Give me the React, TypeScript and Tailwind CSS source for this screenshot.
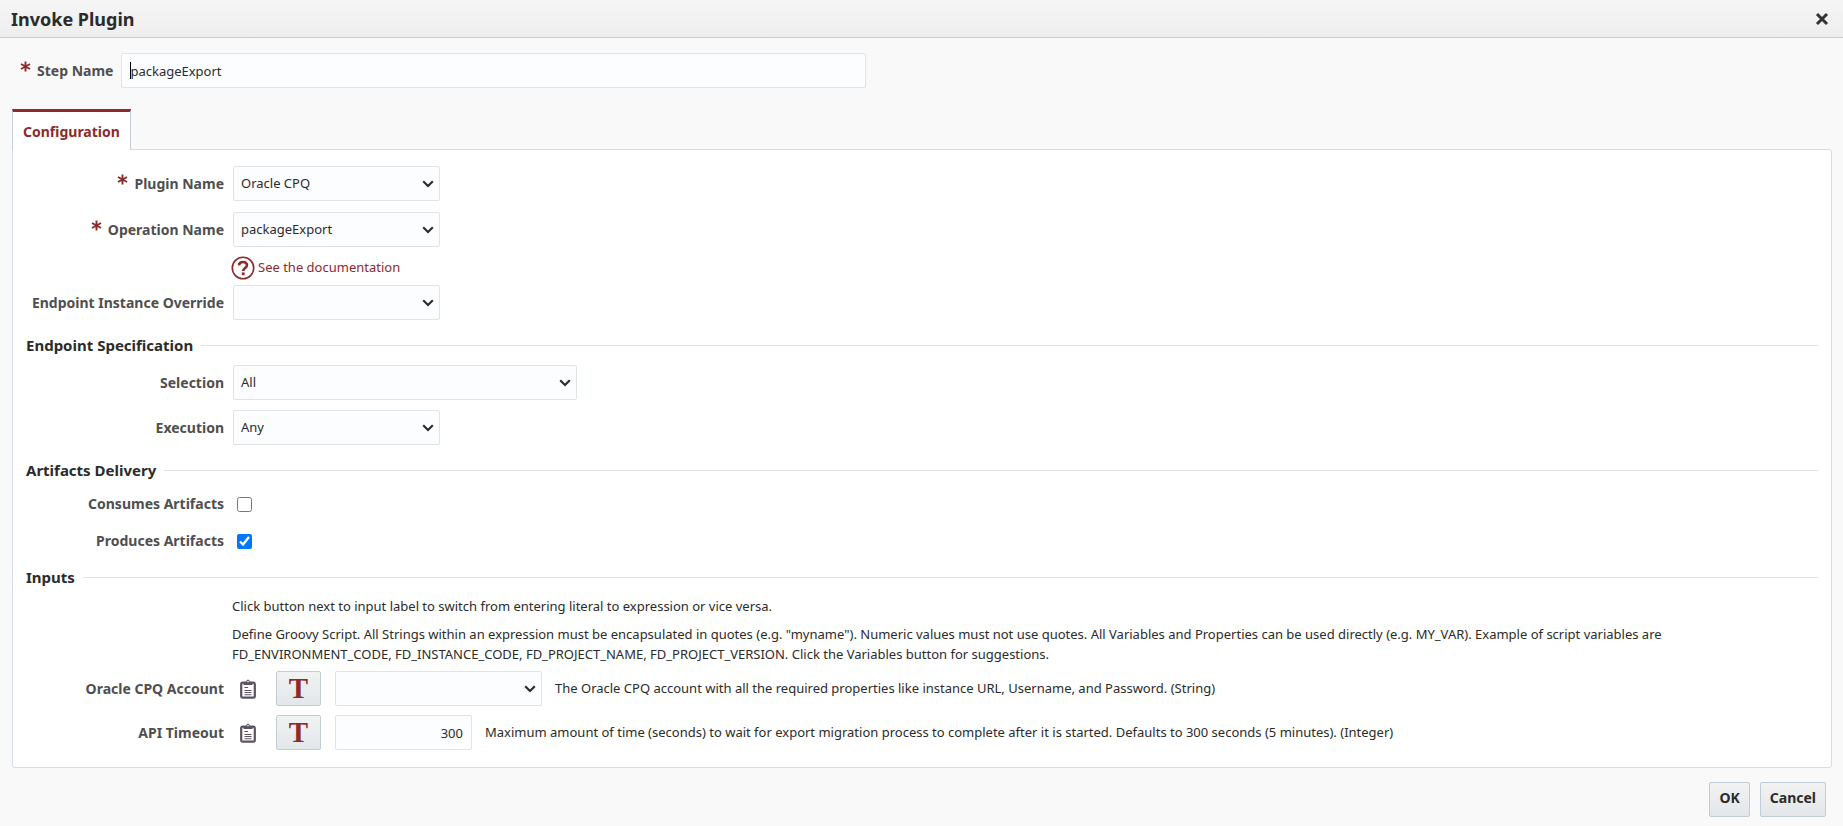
import type { ReactNode } from "react";

const fieldBox =
  "h-[35px] rounded-[2px] border border-[#dfe4e7] bg-[#fcfdff] text-[13px] text-[#2b2b2b]";
const buttonBox =
  "h-[35px] rounded-[2px] border border-[#c0ccd6] bg-linear-to-b from-[#f2f2f2] to-[#e2e7ea]";

function Required() {
  return (
    <svg viewBox="0 0 11 11" className="mr-[6px] mb-2 inline-block size-[11px] shrink-0" aria-label="required">
      <path d="M5.5 0.5V10.5M1 3L10 8M10 3L1 8" stroke="#8d2a2b" strokeWidth="1.9" fill="none" />
    </svg>
  );
}

function Row({
  label,
  htmlFor,
  required,
  children,
  className = "",
}: {
  label: string;
  htmlFor: string;
  required?: boolean;
  children: ReactNode;
  className?: string;
}) {
  return (
    <div className={`flex items-center ${className}`}>
      <div className="mr-[9px] flex w-[211px] shrink-0 items-center justify-end">
        {required && <Required />}
        <label htmlFor={htmlFor} className="text-sm font-bold whitespace-nowrap text-[#4f4f4f]">
          {label}
        </label>
      </div>
      {children}
    </div>
  );
}

function Select({ id, value, width }: { id: string; value: string; width: string }) {
  return (
    <div className={`relative ${width}`}>
      <select id={id} defaultValue={value} className={`${fieldBox} block w-full appearance-none pr-6 pl-[7px]`}>
        <option value={value}>{value}</option>
      </select>
      <svg
        viewBox="0 0 12 8"
        className="pointer-events-none absolute top-[14px] right-[6px] h-2 w-3"
        aria-hidden="true"
      >
        <path d="M1.2 1.2L6 6L10.8 1.2" fill="none" stroke="#2b2b2b" strokeWidth="2.1" />
      </svg>
    </div>
  );
}

function Heading({ children }: { children: ReactNode }) {
  return (
    <div className="flex h-5 items-center gap-2 pr-[13px] pl-[13px]">
      <h2 className="text-[15px] leading-5 font-bold text-[#2b2b2b]">{children}</h2>
      <div className="mt-px h-px flex-1 bg-[#dfe4e7]" />
    </div>
  );
}

function ClipboardIcon() {
  return (
    <svg viewBox="0 0 16 20" className="mx-[7px] h-5 w-4 shrink-0" aria-hidden="true">
      <rect x="1.2" y="3.7" width="13.6" height="15" rx="1.4" fill="#fff" stroke="#5b5360" strokeWidth="2.2" />
      <path d="M3.5 3H6.2Q6.4 0.4 8 0.4T9.8 3H12.5V6H3.5Z" fill="#5b5360" />
      <circle cx="8" cy="2.6" r="0.8" fill="#fff" />
      <path d="M4.5 8.5H8M4.5 11.5H11.5M4.5 13.5H11.5M4.5 15.8H11.5" stroke="#5b5360" strokeWidth="1.1" />
    </svg>
  );
}

function ModeButton({ name }: { name: string }) {
  return (
    <button
      type="button"
      aria-label={name}
      className={`${buttonBox} mr-[14px] ml-[13px] w-[45px] shrink-0 font-['Liberation_Serif',serif] text-[29px] leading-none font-bold text-[#8d2a2b]`}
    >
      T
    </button>
  );
}

export default function App() {
  return (
    <div className="flex min-h-screen flex-col bg-[#f9f9f9] font-['Noto_Sans',sans-serif] text-[13px] text-[#2b2b2b]">
      <header className="flex h-[38px] items-center justify-between border-b border-[#c3ced8] bg-linear-to-b from-[#f5f5f5] to-[#eeeeee] pr-[14px] pl-[11px]">
        <h1 className="text-lg font-bold">Invoke Plugin</h1>
        <button type="button" aria-label="Close">
          <svg viewBox="0 0 14 14" className="size-[14px]">
            <path d="M2 2L12 12M12 2L2 12" stroke="#333" strokeWidth="3" />
          </svg>
        </button>
      </header>

      <div className="mt-[15px] flex items-center pl-5">
        <Required />
        <label htmlFor="step" className="mr-2 text-sm font-bold text-[#4f4f4f]">
          Step Name
        </label>
        <div className="relative flex w-[745px]">
          <input id="step" defaultValue="packageExport" className={`${fieldBox} w-full px-2`} />
          <span className="absolute top-[9px] left-[9px] h-[17px] w-px bg-black" />
        </div>
      </div>

      <main className="mr-[11px] ml-3 mt-[21px] flex flex-col">
        <div role="tablist" className="z-10 -mb-px flex">
          <button
            type="button"
            role="tab"
            aria-selected="true"
            className="h-[41px] border-x border-t-[3px] border-[#c3ced8] border-t-[#8d2a2b] bg-white px-[10px] pt-px text-sm font-bold text-[#8d2a2b]"
          >
            Configuration
          </button>
        </div>

        <section className="rounded-[3px] rounded-tl-none border border-[#d6dee5] bg-white pt-4 pb-[17px]">
          <Row label="Plugin Name" htmlFor="plugin" required>
            <Select id="plugin" value="Oracle CPQ" width="w-[207px]" />
          </Row>
          <Row label="Operation Name" htmlFor="operation" required className="mt-[11px]">
            <Select id="operation" value="packageExport" width="w-[207px]" />
          </Row>
          <div className="flex h-[38px] items-center pt-[3px] pl-[218px]">
            <a href="#docs" className="flex items-center gap-[3px] text-[#8d2a2b]">
              <svg viewBox="0 0 24 24" className="size-6" aria-hidden="true">
                <circle cx="12" cy="12" r="10.7" fill="#fff" stroke="#8d2a2b" strokeWidth="1.6" />
                <path d="M8 9.4C8.2 4.9 16 5 16 9.2C16 12 12.2 12 12.2 15" fill="none" stroke="#8d2a2b" strokeWidth="2.6" />
                <rect x="10.8" y="16.4" width="2.8" height="2.8" fill="#8d2a2b" />
              </svg>
              See the documentation
            </a>
          </div>
          <Row label="Endpoint Instance Override" htmlFor="override">
            <Select id="override" value="" width="w-[207px]" />
          </Row>

          <div className="mt-[15px]">
            <Heading>Endpoint Specification</Heading>
          </div>
          <Row label="Selection" htmlFor="selection" className="mt-[10px]">
            <Select id="selection" value="All" width="w-[344px]" />
          </Row>
          <Row label="Execution" htmlFor="execution" className="mt-[10px]">
            <Select id="execution" value="Any" width="w-[207px]" />
          </Row>

          <div className="mt-[15px]">
            <Heading>Artifacts Delivery</Heading>
          </div>
          <Row label="Consumes Artifacts" htmlFor="consumes" className="mt-3 h-6">
            <input id="consumes" type="checkbox" className="ml-1 size-[15px]" />
          </Row>
          <Row label="Produces Artifacts" htmlFor="produces" className="mt-[13px] h-6">
            <input id="produces" type="checkbox" defaultChecked className="ml-1 size-[15px]" />
          </Row>

          <div className="mt-[14px]">
            <Heading>Inputs</Heading>
          </div>
          <div className="mt-[9px] pr-[150px] pl-[219px] leading-5">
            <p>Click button next to input label to switch from entering literal to expression or vice versa.</p>
            <p className="mt-2">
              Define Groovy Script. All Strings within an expression must be encapsulated in quotes (e.g. "myname").
              Numeric values must not use quotes. All Variables and Properties can be used directly (e.g. MY_VAR).
              Example of script variables are FD_ENVIRONMENT_CODE, FD_INSTANCE_CODE, FD_PROJECT_NAME,
              FD_PROJECT_VERSION. Click the Variables button for suggestions.
            </p>
          </div>
          <Row label="Oracle CPQ Account" htmlFor="account" className="mt-[7px]">
            <ClipboardIcon />
            <ModeButton name="Switch Oracle CPQ Account mode" />
            <Select id="account" value="" width="w-[207px]" />
            <span className="ml-[13px]">
              The Oracle CPQ account with all the required properties like instance URL, Username, and Password. (String)
            </span>
          </Row>
          <Row label="API Timeout" htmlFor="timeout" className="mt-[9px]">
            <ClipboardIcon />
            <ModeButton name="Switch API Timeout mode" />
            <input id="timeout" defaultValue="300" className={`${fieldBox} w-[137px] px-2 text-right`} />
            <span className="ml-[13px]">
              Maximum amount of time (seconds) to wait for export migration process to complete after it is started.
              Defaults to 300 seconds (5 minutes). (Integer)
            </span>
          </Row>
        </section>
      </main>

      <footer className="mt-[14px] flex justify-end gap-[10px] pr-[17px] pb-[9px] text-sm font-bold">
        <button type="button" className={`${buttonBox} px-[9px] pb-1`}>
          OK
        </button>
        <button type="button" className={`${buttonBox} px-[9px] pb-1`}>
          Cancel
        </button>
      </footer>
    </div>
  );
}
